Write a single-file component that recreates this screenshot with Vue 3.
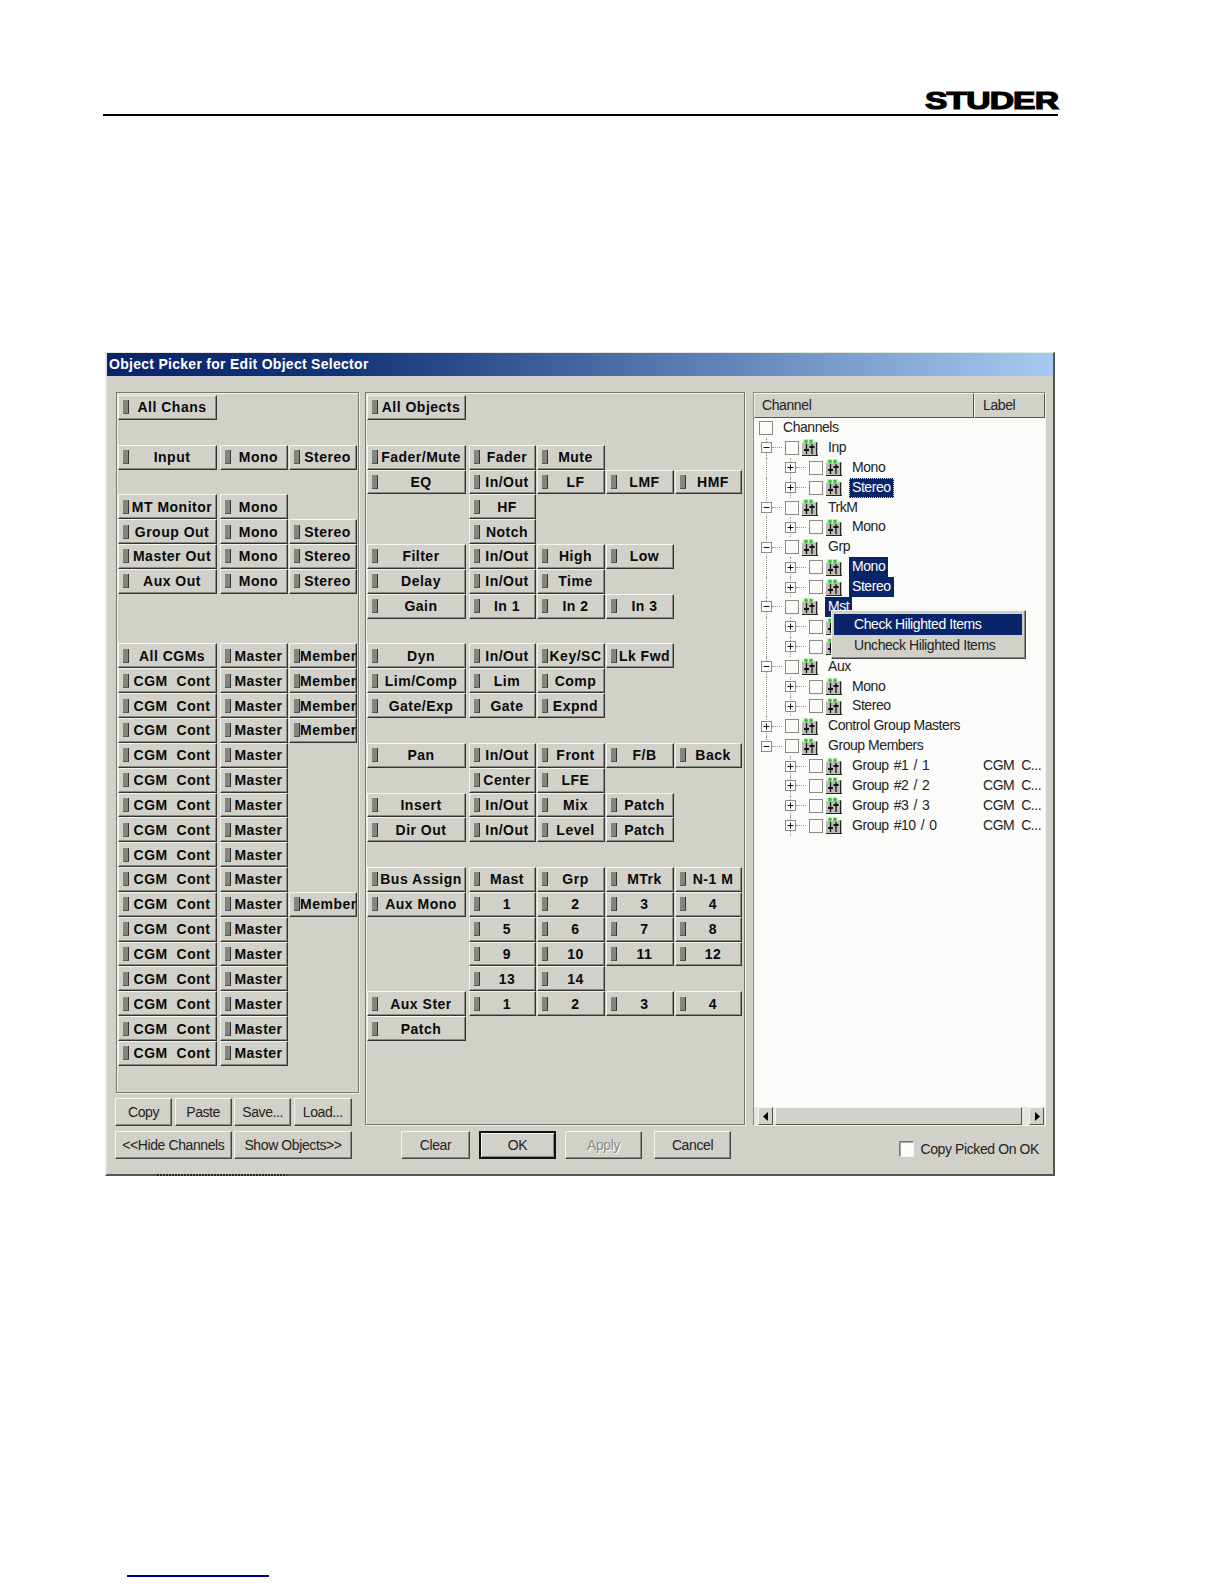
<script setup>
const cgm = 'CGM  Cont'
const leftRows = [
  ['All Chans'], [],
  ['Input', 'Mono', 'Stereo'], [],
  ['MT Monitor', 'Mono'],
  ['Group Out', 'Mono', 'Stereo'],
  ['Master Out', 'Mono', 'Stereo'],
  ['Aux Out', 'Mono', 'Stereo'],
  [], [],
  ['All CGMs', 'Master', 'Member'],
  [cgm, 'Master', 'Member'],
  [cgm, 'Master', 'Member'],
  [cgm, 'Master', 'Member'],
  [cgm, 'Master'], [cgm, 'Master'], [cgm, 'Master'],
  [cgm, 'Master'], [cgm, 'Master'], [cgm, 'Master'],
  [cgm, 'Master', 'Member'],
  [cgm, 'Master'], [cgm, 'Master'], [cgm, 'Master'],
  [cgm, 'Master'], [cgm, 'Master'], [cgm, 'Master']
]
const midRows = [
  ['All Objects'], [],
  ['Fader/Mute', 'Fader', 'Mute'],
  ['EQ', 'In/Out', 'LF', 'LMF', 'HMF'],
  ['', 'HF'],
  ['', 'Notch'],
  ['Filter', 'In/Out', 'High', 'Low'],
  ['Delay', 'In/Out', 'Time'],
  ['Gain', 'In 1', 'In 2', 'In 3'],
  [],
  ['Dyn', 'In/Out', 'Key/SC', 'Lk Fwd'],
  ['Lim/Comp', 'Lim', 'Comp'],
  ['Gate/Exp', 'Gate', 'Expnd'],
  [],
  ['Pan', 'In/Out', 'Front', 'F/B', 'Back'],
  ['', 'Center', 'LFE'],
  ['Insert', 'In/Out', 'Mix', 'Patch'],
  ['Dir Out', 'In/Out', 'Level', 'Patch'],
  [],
  ['Bus Assign', 'Mast', 'Grp', 'MTrk', 'N-1 M'],
  ['Aux Mono', '1', '2', '3', '4'],
  ['', '5', '6', '7', '8'],
  ['', '9', '10', '11', '12'],
  ['', '13', '14'],
  ['Aux Ster', '1', '2', '3', '4'],
  ['Patch']
]
function cells(rows, n) {
  const out = []
  rows.forEach((r) => {
    for (let i = 0; i < n; i++) out.push({ text: r[i] || '', first: i === 0 })
  })
  return out
}
const leftCells = cells(leftRows, 3)
const midCells = cells(midRows, 5)

const tree = [
  { lvl: 0, label: 'Channels' },
  { lvl: 1, exp: '-', label: 'Inp' },
  { lvl: 2, exp: '+', label: 'Mono' },
  { lvl: 2, exp: '+', label: 'Stereo', sel: true, focus: true },
  { lvl: 1, exp: '-', label: 'TrkM' },
  { lvl: 2, exp: '+', label: 'Mono' },
  { lvl: 1, exp: '-', label: 'Grp' },
  { lvl: 2, exp: '+', label: 'Mono', sel: true },
  { lvl: 2, exp: '+', label: 'Stereo', sel: true },
  { lvl: 1, exp: '-', label: 'Mst', sel: true },
  { lvl: 2, exp: '+', label: '' },
  { lvl: 2, exp: '+', label: '' },
  { lvl: 1, exp: '-', label: 'Aux' },
  { lvl: 2, exp: '+', label: 'Mono' },
  { lvl: 2, exp: '+', label: 'Stereo' },
  { lvl: 1, exp: '+', label: 'Control Group Masters' },
  { lvl: 1, exp: '-', label: 'Group Members', end: true },
  { lvl: 3, exp: '+', label: 'Group #1 / 1', col: 'CGM  C...' },
  { lvl: 3, exp: '+', label: 'Group #2 / 2', col: 'CGM  C...' },
  { lvl: 3, exp: '+', label: 'Group #3 / 3', col: 'CGM  C...' },
  { lvl: 3, exp: '+', label: 'Group #10 / 0', col: 'CGM  C...' }
]
</script>

<template>
  <div class="page">
    <header class="head">
      <span class="logo">STUDER</span>
    </header>

    <section class="win">
      <div class="title">Object Picker for Edit Object Selector</div>
      <div class="body">
        <div class="col-left">
          <div class="panel panel-left">
            <div class="grid grid-left">
              <div v-for="(c, i) in leftCells" :key="i" class="cell" :class="{ first: c.first }">
                <div v-if="c.text" class="tbtn"><i class="led"></i><span>{{ c.text }}</span></div>
              </div>
            </div>
          </div>
          <div class="cmds">
            <button class="btn">Copy</button>
            <button class="btn">Paste</button>
            <button class="btn">Save...</button>
            <button class="btn">Load...</button>
            <button class="btn span2">&lt;&lt;Hide Channels</button>
            <button class="btn span2">Show Objects&gt;&gt;</button>
          </div>
        </div>

        <div class="col-mid">
          <div class="panel panel-mid">
            <div class="grid grid-mid">
              <div v-for="(c, i) in midCells" :key="i" class="cell" :class="{ first: c.first }">
                <div v-if="c.text" class="tbtn"><i class="led"></i><span>{{ c.text }}</span></div>
              </div>
            </div>
          </div>
          <div class="actions">
            <button class="btn w-clear">Clear</button>
            <button class="btn w-act default">OK</button>
            <button class="btn w-act disabled">Apply</button>
            <button class="btn w-act cancel">Cancel</button>
          </div>
        </div>

        <div class="col-right">
          <div class="list">
            <div class="list-head">
              <div class="th th-ch">Channel</div>
              <div class="th th-la">Label</div>
            </div>
            <div class="tree">
              <div
                v-for="(r, i) in tree"
                :key="i"
                class="row"
                :class="['l' + r.lvl, { end: r.end }]"
              >
                <svg v-if="r.exp" class="exp" width="11" height="11" viewBox="0 0 11 11">
                  <rect x="0.5" y="0.5" width="10" height="10" fill="#fff" stroke="#8a8a8a" />
                  <path d="M2.5 5.5h6" stroke="#111" />
                  <path v-if="r.exp === '+'" d="M5.5 2.5v6" stroke="#111" />
                </svg>
                <i v-if="r.exp" class="dots"></i>
                <i class="check"></i>
                <svg v-if="r.lvl" class="ico" width="16" height="17" viewBox="0 0 16 17">
                  <rect x="0" y="3" width="16" height="14" fill="#bdbdb5" />
                  <rect x="0" y="0" width="12" height="4" fill="#e4efdc" />
                  <circle cx="4" cy="2.4" r="1.9" fill="#35c83a" />
                  <circle cx="9" cy="2.4" r="1.9" fill="#35c83a" />
                  <path d="M4.5 5v10M10 5v10" stroke="#111" stroke-width="1.3" fill="none" />
                  <path d="M2 11h5M7.5 8h5" stroke="#111" stroke-width="1.8" />
                  <path d="M14.5 3.5v13M0 16.5h16" stroke="#222" />
                </svg>
                <span v-if="r.label" class="lab" :class="{ sel: r.sel, focus: r.focus }">{{ r.label }}</span>
                <span v-if="r.col" class="col2">{{ r.col }}</span>
              </div>
              <div class="menu">
                <div class="mi on">Check Hilighted Items</div>
                <div class="mi">Uncheck Hilighted Items</div>
              </div>
            </div>
            <div class="hbar">
              <div class="sb-btn">
                <svg width="6" height="9" viewBox="0 0 6 9"><path d="M5 0v9L0 4.5z" fill="#000" /></svg>
              </div>
              <div class="sb-thumb"></div>
              <div class="sb-track"></div>
              <div class="sb-btn">
                <svg width="6" height="9" viewBox="0 0 6 9"><path d="M1 0v9l5-4.5z" fill="#000" /></svg>
              </div>
            </div>
          </div>
          <label class="copy"><i class="check check-f"></i><span>Copy Picked On OK</span></label>
        </div>
      </div>
      <div class="bleed"></div>
    </section>

    <div class="foot"></div>
  </div>
</template>

<style>
html, body { margin: 0; background: #fff; }
</style>

<style scoped>
.page {
  width: 1224px;
  height: 1584px;
  box-sizing: border-box;
  padding: 0 0 0 103px;
  background: #fff;
  overflow: hidden;
  font-family: "Liberation Sans", Arial, sans-serif;
}
.head {
  width: 955px;
  height: 116px;
  box-sizing: border-box;
  border-bottom: 2px solid #000;
  display: flex;
  justify-content: flex-end;
  align-items: flex-end;
  padding-bottom: 4px;
}
.logo {
  display: inline-block;
  font-size: 24px;
  line-height: 18px;
  font-weight: 700;
  color: #000;
  -webkit-text-stroke: 1.2px #000;
  transform: scaleX(1.4);
  transform-origin: right center;
  letter-spacing: -0.6px;
}
.win {
  position: relative;
  margin: 236px 0 0 2px;
  width: 950px;
  height: 824px;
  box-sizing: border-box;
  background: #d1d0c9;
  border-left: 2px solid #e6e6e0;
  border-top: 1px solid #e6e6e0;
  border-right: 2px solid #55554f;
  border-bottom: 2px solid #55554f;
}
.title {
  height: 23px;
  line-height: 23px;
  padding-left: 2px;
  color: #fff;
  font-size: 14px;
  font-weight: 700;
  letter-spacing: 0.28px;
  background: linear-gradient(90deg, #0a246a 0%, #143478 25%, #4d70a8 55%, #a6caf0 100%);
}
.body {
  display: grid;
  grid-template-columns: 244px 380px 295px;
  column-gap: 6px;
  padding: 16px 0 0 8px;
}
.col-right { margin-left: 2px; }
.panel {
  box-sizing: border-box;
  border: 1px solid #77776f;
  box-shadow: inset 1px 1px 0 #f2f2ec, 1px 1px 0 #f2f2ec;
}
.panel-left { height: 701px; margin-left: 1px; padding: 2px 0 0 1px; }
.panel-mid { height: 733px; padding: 2px 0 0 1px; }
.grid { display: grid; grid-auto-rows: 24.85px; }
.grid-left { grid-template-columns: 102px 69px 69px; }
.grid-mid { grid-template-columns: 102px 68px 69px 69px 68px; }
.cell { padding-right: 1px; min-width: 0; }
.cell.first { padding-right: 3px; }
.tbtn {
  box-sizing: border-box;
  height: 100%;
  display: flex;
  align-items: center;
  padding: 0 1px 0 4px;
  background: #d1d0c9;
  border: 1px solid;
  border-color: #f4f4ee #333 #333 #f4f4ee;
  box-shadow: inset -1px -1px 0 #8a8a84;
  color: #0a0a0a;
  font-size: 14px;
  font-weight: 700;
  letter-spacing: 0.5px;
  white-space: pre;
  overflow: hidden;
}
.led {
  flex: none;
  width: 6px;
  height: 14px;
  background: #85857f;
  border-right: 1px solid #333;
  border-bottom: 1px solid #555;
  box-sizing: border-box;
}
.tbtn span { flex: 1; text-align: center; min-width: 0; }
.cmds {
  margin-top: 5px;
  display: grid;
  grid-template-columns: 57px 57px 57px 58px;
  column-gap: 2.6px;
  row-gap: 5px;
  grid-auto-rows: 28px;
  width: 237px;
}
.span2 { grid-column: span 2; }
.btn {
  box-sizing: border-box;
  padding: 0;
  margin: 0;
  height: 28px;
  background: #d1d0c9;
  border: 1px solid;
  border-color: #f4f4ee #444 #444 #f4f4ee;
  box-shadow: inset -1px -1px 0 #8a8a84;
  color: #222;
  font-family: "Liberation Sans", Arial, sans-serif;
  font-size: 14px;
  white-space: nowrap;
  letter-spacing: -0.4px;
}
.actions {
  margin: 6px 0 0 36px;
  display: flex;
  gap: 9px;
}
.w-clear { width: 69px; }
.w-act { width: 77px; }
.cancel { margin-left: 3px; }
.default {
  border: 2px solid #111;
  box-shadow: inset 1px 1px 0 #f4f4ee, inset -1px -1px 0 #8a8a84;
}
.disabled { color: #8a8a84; text-shadow: 1px 1px 0 #fff; }
.list {
  box-sizing: border-box;
  height: 734px;
  display: flex;
  flex-direction: column;
  border: 1px solid #8a8a84;
  border-right-color: #f4f4ee;
  border-bottom-color: #f4f4ee;
  background: #fbfbf9;
}
.list-head { display: flex; height: 25px; flex: none; }
.th {
  box-sizing: border-box;
  height: 25px;
  line-height: 22px;
  padding-left: 7px;
  background: #d1d0c9;
  border: 1px solid;
  border-color: #f4f4ee #55554f #55554f #f4f4ee;
  font-size: 14px;
  color: #222;
  letter-spacing: -0.4px;
}
.th-ch { width: 220px; }
.th-la { flex: 1; padding-left: 8px; }
.tree {
  position: relative;
  flex: 1;
  min-height: 0;
  overflow: hidden;
}
.row {
  position: relative;
  box-sizing: border-box;
  height: 19.9px;
  display: flex;
  align-items: center;
  font-size: 14px;
  color: #222;
  white-space: pre;
  letter-spacing: -0.45px;
}
.l0 { padding-left: 5px; }
.l1 { padding-left: 7px; }
.l2, .l3 { padding-left: 31px; }
.l3 { word-spacing: 1.6px; }
.l1::before, .l2::before {
  content: "";
  position: absolute;
  left: 12px;
  top: 0;
  bottom: 0;
  border-left: 1px dotted #999;
}
.l2::after, .l3::after {
  content: "";
  position: absolute;
  left: 36px;
  top: 0;
  bottom: 0;
  border-left: 1px dotted #999;
}
.end::before { bottom: 50%; }
.exp { position: relative; z-index: 1; flex: none; }
.dots {
  flex: none;
  width: 10px;
  margin: 0 3px 0 0;
  border-top: 1px dotted #999;
}
.check {
  flex: none;
  box-sizing: border-box;
  width: 14px;
  height: 14px;
  border: 1px solid #8a8a84;
  background: #fbfbf9;
}
.l0 .check { margin-right: 7px; }
.ico { flex: none; margin-left: 3px; }
.lab {
  margin-left: 7px;
  padding: 0 3px;
  height: 20px;
  line-height: 19px;
  box-sizing: border-box;
}
.l0 .lab { margin-left: 0; padding: 0 3px; }
.sel { background: #0a246a; color: #fff; }
.focus { outline: 1px dotted #d8d8a0; outline-offset: -1px; }
.col2 {
  position: absolute;
  left: 229px;
  top: 0;
  line-height: 19.9px;
  word-spacing: 0;
}
.menu {
  position: absolute;
  z-index: 2;
  left: 77px;
  top: 192px;
  width: 195px;
  height: 49px;
  box-sizing: border-box;
  padding: 3px 3px 0 2px;
  background: #d1d0c9;
  border: 1px solid;
  border-color: #f4f4ee #444 #444 #f4f4ee;
  box-shadow: inset -1px -1px 0 #8a8a84;
}
.mi {
  height: 21px;
  line-height: 20px;
  padding-left: 20px;
  font-size: 14px;
  color: #222;
  letter-spacing: -0.42px;
}
.mi.on { background: #0a246a; color: #fff; }
.hbar {
  flex: none;
  height: 19px;
  box-sizing: border-box;
  display: flex;
  padding: 0 1px 0 4px;
  background: #e6e6e0;
  border-top: 1px solid #fbfbf9;
}
.sb-btn, .sb-thumb {
  box-sizing: border-box;
  height: 18px;
  background: #d1d0c9;
  border: 1px solid;
  border-color: #f4f4ee #55554f #55554f #f4f4ee;
}
.sb-btn {
  flex: none;
  width: 15px;
  display: flex;
  align-items: center;
  justify-content: center;
}
.sb-thumb { width: 247px; margin-left: 2px; }
.sb-track { flex: 1; }
.copy {
  margin: 15px 0 0 0;
  padding-right: 7px;
  display: flex;
  justify-content: flex-end;
  align-items: center;
  gap: 7px;
  font-size: 14px;
  color: #222;
  letter-spacing: -0.4px;
}
.check-f { width: 15px; height: 16px; border-color: #77776f #f4f4ee #f4f4ee #77776f; box-shadow: inset 1px 1px 0 #a8a8a2; }
.bleed {
  position: absolute;
  left: 50px;
  bottom: -2px;
  width: 130px;
  height: 2px;
  background: repeating-linear-gradient(90deg, #222 0 2px, #8a8a84 2px 3px);
}
.foot {
  margin: 399px 0 0 24px;
  width: 142px;
  height: 2px;
  background: #00008b;
}
</style>
